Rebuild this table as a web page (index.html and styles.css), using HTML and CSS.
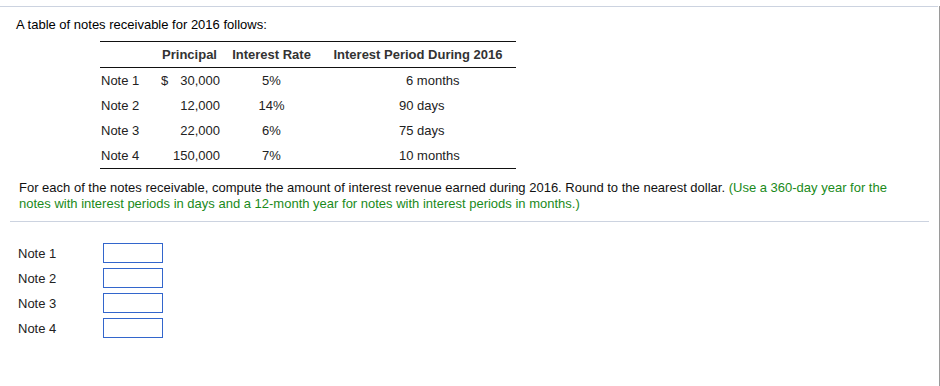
FILE: index.html
```html
<!DOCTYPE html>
<html>
<head>
<meta charset="utf-8">
<link rel="stylesheet" href="styles.css">
</head>
<body>
<div class="page">
  <div class="rule-top"></div>
  <p class="intro">A table of notes receivable for 2016 follows:</p>
  <table class="notes">
    <colgroup>
      <col class="w1"><col class="w2"><col class="w3"><col class="w4">
    </colgroup>
    <thead>
      <tr>
        <th class="c1"></th>
        <th class="c2">Principal</th>
        <th class="c3">Interest Rate</th>
        <th class="c4">Interest Period During 2016</th>
      </tr>
    </thead>
    <tbody>
      <tr>
        <td class="c1">Note 1</td>
        <td class="c2"><div class="amt"><span>$</span><span>30,000</span></div></td>
        <td class="c3">5%</td>
        <td class="c4"><span class="pad">6 months</span></td>
      </tr>
      <tr>
        <td class="c1">Note 2</td>
        <td class="c2"><div class="amt"><span></span><span>12,000</span></div></td>
        <td class="c3">14%</td>
        <td class="c4">90 days</td>
      </tr>
      <tr>
        <td class="c1">Note 3</td>
        <td class="c2"><div class="amt"><span></span><span>22,000</span></div></td>
        <td class="c3">6%</td>
        <td class="c4">75 days</td>
      </tr>
      <tr>
        <td class="c1">Note 4</td>
        <td class="c2"><div class="amt"><span></span><span>150,000</span></div></td>
        <td class="c3">7%</td>
        <td class="c4">10 months</td>
      </tr>
    </tbody>
  </table>
  <p class="question">For each of the notes receivable, compute the amount of interest revenue earned during 2016. Round to the nearest dollar. <span class="hint">(Use a 360-day year for the notes with interest periods in days and a 12-month year for notes with interest periods in months.)</span></p>
  <div class="rule-mid"></div>
  <div class="answers">
    <div class="answer"><span class="label">Note 1</span><input class="box" type="text"></div>
    <div class="answer"><span class="label">Note 2</span><input class="box" type="text"></div>
    <div class="answer"><span class="label">Note 3</span><input class="box" type="text"></div>
    <div class="answer"><span class="label">Note 4</span><input class="box" type="text"></div>
  </div>
</div>
</body>
</html>
```
FILE: styles.css
```css
html, body {
  margin: 0;
  padding: 0;
  background: #fff;
}
body {
  font-family: "Liberation Sans", Arial, Helvetica, sans-serif;
  font-size: 13px;
  color: #000;
}
.page {
  width: 939px;
  height: 386px;
  border-right: 1px solid #9a9a9a;
}
.rule-top {
  margin-top: 6px;
  width: 938px;
  border-top: 1px solid #ccd3e0;
}
.intro {
  margin: 10px 0 0 16px;
  line-height: 16px;
}
.notes {
  margin: 8px 0 0 100px;
  width: 416px;
  border-collapse: collapse;
  color: #222;
  table-layout: fixed;
}
.w1 { width: 57px; }
.w2 { width: 68px; }
.w3 { width: 93px; }
.w4 { width: 198px; }
.notes thead tr {
  border-top: 1px solid #111;
  border-bottom: 1px solid #111;
}
.notes tbody tr:last-child {
  border-bottom: 1px solid #111;
}
.notes th, .notes td {
  height: 25px;
  padding: 0;
  line-height: 16px;
  vertical-align: middle;
}
.notes th {
  font-weight: bold;
  color: #333;
}
.c1 { text-align: left; padding-left: 1px !important; }
.c3 { text-align: center; }
th.c2 { text-align: right; padding-right: 8px !important; }
td.c2 {
  padding-left: 4px !important;
  padding-right: 5px !important;
}
.amt {
  display: flex;
  justify-content: space-between;
}
th.c4 { text-align: center; padding-left: 2px !important; }
td.c4 { text-align: left; padding-left: 81px !important; }
.pad { padding-left: 7px; }
.question {
  margin: 11px 0 0 19px;
  width: 880px;
  line-height: 16px;
  color: #111;
}
.hint { color: #1a8a1a; }
.rule-mid {
  margin: 9px 0 0 10px;
  width: 919px;
  border-top: 1px solid #ccd3e0;
}
.answers {
  margin-top: 21px;
  display: flex;
  flex-direction: column;
  gap: 5px;
}
.answer {
  display: flex;
  align-items: center;
  height: 20px;
}
.label {
  width: 85px;
  padding-left: 18px;
  color: #222;
}
.box {
  width: 60px;
  height: 20px;
  box-sizing: border-box;
  border: 1px solid #3366cc;
  margin: 0;
  padding: 0;
  background: #fff;
  outline: none;
}
```
